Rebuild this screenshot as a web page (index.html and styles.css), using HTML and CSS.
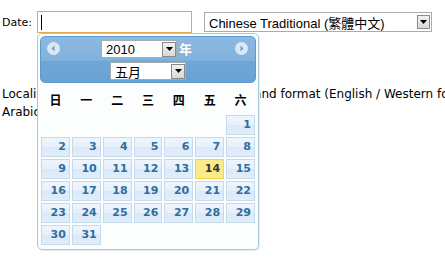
FILE: index.html
```html
<!DOCTYPE html>
<html lang="zh-Hant">
<head>
    <meta charset="UTF-8">
    <meta name="viewport" content="width=device-width, initial-scale=1.0">
    <title>Datepicker - Chinese Traditional</title>
    <link rel="stylesheet" href="styles.css">
</head>
<body>
    <div class="field-row">
        <label class="field-label">Date:</label>
        <div class="date-input"><span class="caret"></span></div>
        <div class="select lang-select">
            <span class="select-text">Chinese Traditional (繁體中文)</span>
            <span class="select-btn"><svg width="7" height="4" viewBox="0 0 7 4"><path d="M0 0h7L3.5 4z" fill="#000"/></svg></span>
        </div>
    </div>
    <p class="note">Localized in Chinese Traditional language and format (English / Western format for<br>Arabic numerals).</p>

    <div class="datepicker">
        <div class="dp-header">
            <span class="dp-nav dp-prev"><svg width="13" height="13" viewBox="0 0 13 13"><circle cx="6.5" cy="6.5" r="6.5" fill="#dbe8f5"/><path d="M7.5 3.5v6L4.5 6.5z" fill="#6d9fcf"/></svg></span>
            <span class="dp-nav dp-next"><svg width="13" height="13" viewBox="0 0 13 13"><circle cx="6.5" cy="6.5" r="6.5" fill="#dbe8f5"/><path d="M5.5 3.5v6l3-3z" fill="#6d9fcf"/></svg></span>
            <div class="dp-title-row">
                <div class="select dp-select">
                    <span class="select-text">2010</span>
                    <span class="select-btn"><svg width="7" height="4" viewBox="0 0 7 4"><path d="M0 0h7L3.5 4z" fill="#000"/></svg></span>
                </div>
                <span class="dp-year-label">年</span>
            </div>
            <div class="dp-title-row">
                <div class="select dp-select">
                    <span class="select-text">五月</span>
                    <span class="select-btn"><svg width="7" height="4" viewBox="0 0 7 4"><path d="M0 0h7L3.5 4z" fill="#000"/></svg></span>
                </div>
            </div>
        </div>
        <div class="dp-days">
            <span>日</span><span>一</span><span>二</span><span>三</span><span>四</span><span>五</span><span>六</span>
        </div>
        <div class="dp-grid">
            <span></span><span></span><span></span><span></span><span></span><span></span>
            <a class="dp-day">1</a>
            <a class="dp-day">2</a><a class="dp-day">3</a><a class="dp-day">4</a><a class="dp-day">5</a><a class="dp-day">6</a><a class="dp-day">7</a><a class="dp-day">8</a>
            <a class="dp-day">9</a><a class="dp-day">10</a><a class="dp-day">11</a><a class="dp-day">12</a><a class="dp-day">13</a><a class="dp-day today">14</a><a class="dp-day">15</a>
            <a class="dp-day">16</a><a class="dp-day">17</a><a class="dp-day">18</a><a class="dp-day">19</a><a class="dp-day">20</a><a class="dp-day">21</a><a class="dp-day">22</a>
            <a class="dp-day">23</a><a class="dp-day">24</a><a class="dp-day">25</a><a class="dp-day">26</a><a class="dp-day">27</a><a class="dp-day">28</a><a class="dp-day">29</a>
            <a class="dp-day">30</a><a class="dp-day">31</a>
        </div>
    </div>
</body>
</html>
```

FILE: styles.css
```css
html, body {
    overflow: hidden;
}
body {
    margin: 0;
    padding: 0;
    background: #fff;
    color: #000;
    font-family: "DejaVu Sans", Verdana, sans-serif;
    font-size: 11px;
}
.field-row {
    display: flex;
    align-items: center;
    padding: 11px 0 0 2px;
}
.field-label {
    width: 35px;
}
.date-input {
    position: relative;
    width: 153px;
    height: 20px;
    border: 1px solid #e2a94d;
    background: #fff;
}
.caret {
    position: absolute;
    left: 3px;
    top: 3px;
    width: 1px;
    height: 15px;
    background: #000;
}
.select {
    display: flex;
    align-items: center;
    justify-content: space-between;
    box-sizing: border-box;
    border: 1px solid #a5acb2;
    background: #fff;
    font-family: "Liberation Sans", Arial, "Noto Sans CJK TC", sans-serif;
    font-size: 13px;
    color: #000;
}
.select-text {
    padding-left: 4px;
    white-space: nowrap;
}
.select-btn {
    display: flex;
    align-items: center;
    justify-content: center;
    box-sizing: border-box;
    width: 13px;
    height: 14px;
    margin-right: 1px;
    border: 1px solid #8a8a8a;
    background: linear-gradient(#f2f2f2, #d8d8d8);
}
.lang-select {
    width: 228px;
    height: 20px;
    margin-left: 12px;
}
.note {
    margin: 52px 0 0 2px;
    font-size: 12px;
    line-height: 18px;
    white-space: nowrap;
}
.datepicker {
    position: absolute;
    left: 37px;
    top: 33px;
    width: 216px;
    padding: 2px 2px 4px;
    border: 1px solid #a6c9e2;
    border-radius: 5px;
    background: #fcfdfd;
    box-shadow: 1px 1px 0 #e4eef7;
}
.dp-header {
    position: relative;
    box-sizing: border-box;
    height: 47px;
    padding-top: 3px;
    border: 1px solid #5b99d2;
    border-radius: 5px;
    background: linear-gradient(#8bb9e1 0%, #82b2dc 52%, #6ea6d7 53%, #6aa2d4 100%);
    display: flex;
    flex-direction: column;
    align-items: center;
    gap: 4px;
}
.dp-nav {
    position: absolute;
    top: 5px;
    display: flex;
}
.dp-prev {
    left: 6px;
}
.dp-next {
    right: 7px;
}
.dp-title-row {
    display: flex;
    align-items: center;
}
.dp-select {
    width: 76px;
    height: 18px;
}
.dp-select .select-btn {
    height: 15px;
    width: 14px;
    margin-right: 0;
}
.dp-year-label {
    margin-left: 2px;
    width: 16px;
    color: #fff;
    font-weight: bold;
    font-size: 13px;
    font-family: "Noto Sans CJK TC", sans-serif;
    line-height: 16px;
}
.dp-days {
    display: grid;
    grid-template-columns: repeat(7, 1fr);
    column-gap: 2px;
    margin: 4px 1px 0;
    width: 214px;
    height: 24px;
    align-items: center;
    text-align: center;
    font-family: "Noto Sans CJK TC", sans-serif;
    font-weight: bold;
    font-size: 12px;
}
.dp-grid {
    display: grid;
    grid-template-columns: repeat(7, 1fr);
    grid-auto-rows: 20px;
    gap: 2px;
    margin: 4px 1px 0;
    width: 214px;
}
.dp-day {
    box-sizing: border-box;
    border: 1px solid #c5dbec;
    background: linear-gradient(#eef5fd 0%, #e6f0fb 50%, #dae9f9 51%, #e1edfa 100%);
    color: #2e6e9e;
    font-weight: bold;
    font-size: 11px;
    text-align: right;
    padding-right: 3px;
    line-height: 18px;
}
.dp-day.today {
    border-color: #f5d350;
    background: #fbeb88;
    color: #363636;
}
```
